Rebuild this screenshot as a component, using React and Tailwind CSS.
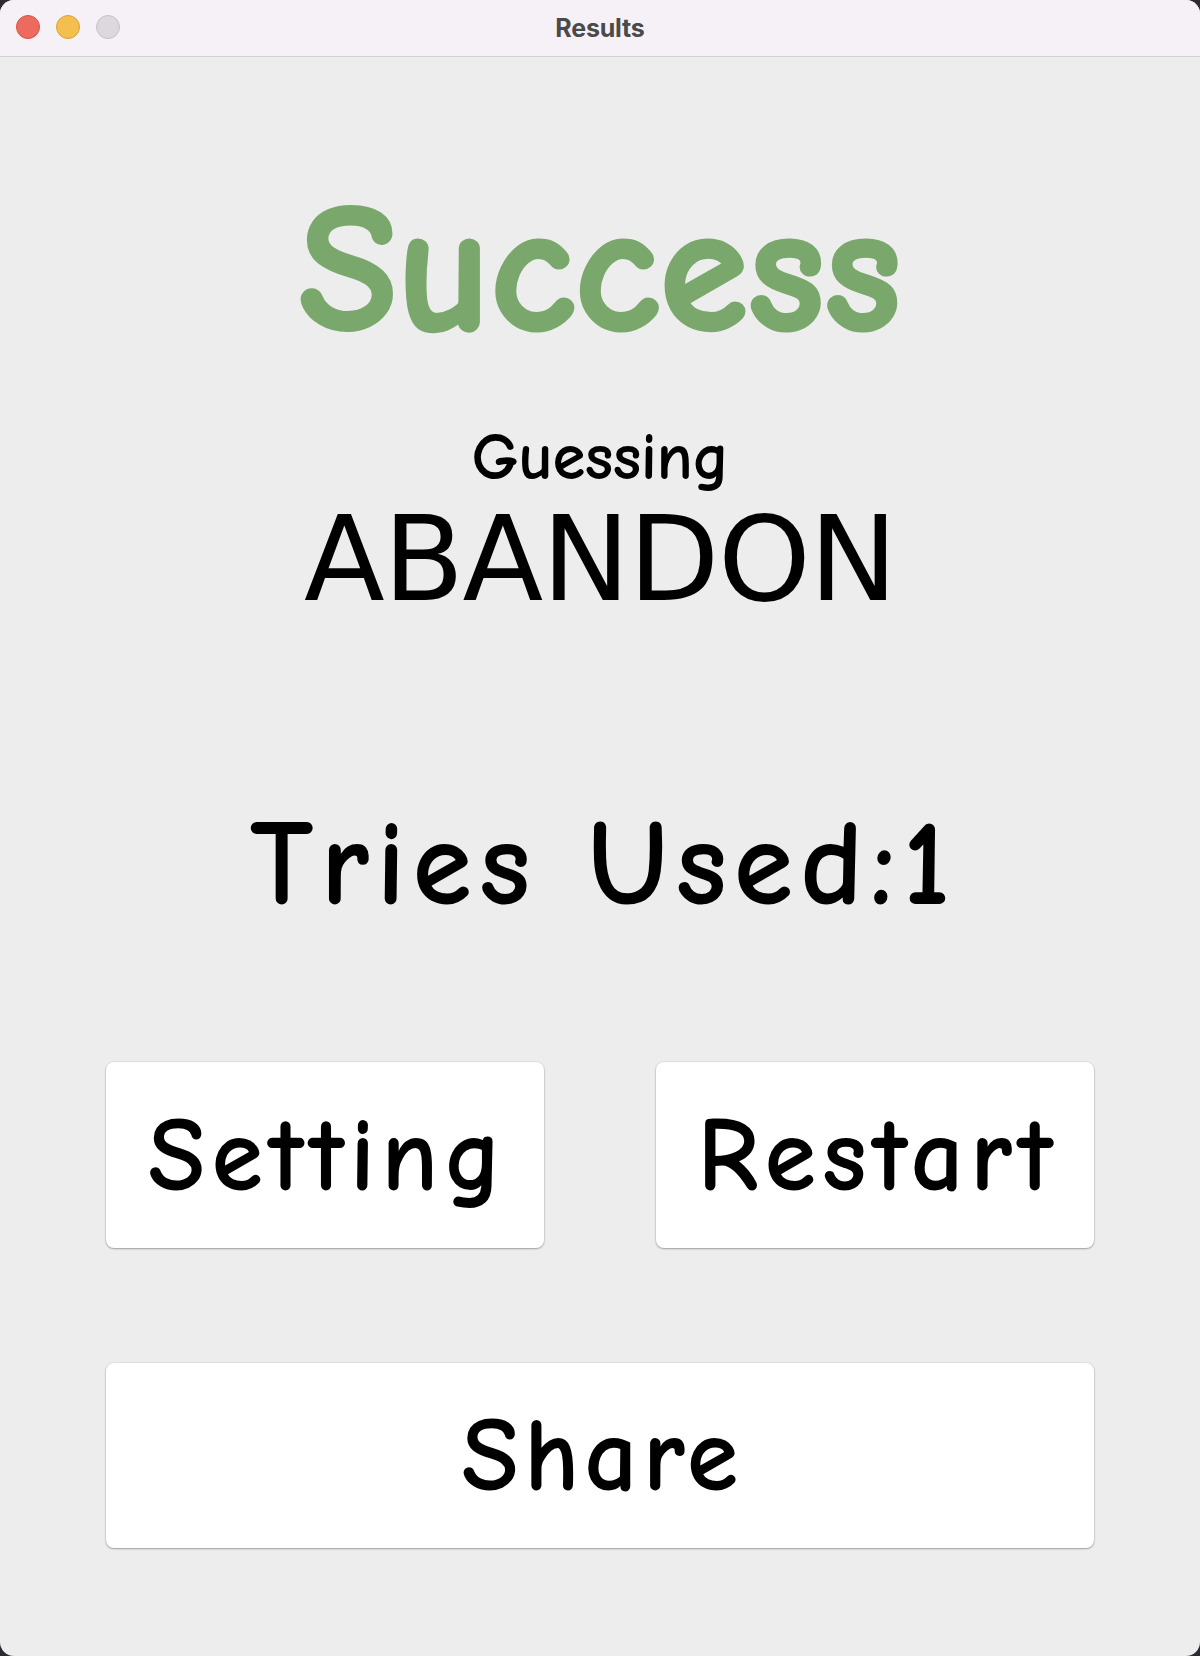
import React from "react";

const comic = { fontFamily: '"Comic Sans MS", "Comic Neue", "Open Sans", sans-serif' };

export default function App() {
  return (
    <div className="w-[1200px] h-[1656px] bg-[#2b2b30]">
      <div className="w-full h-full bg-[#ededed] rounded-[14px] overflow-hidden flex flex-col">
        {/* title bar */}
        <div className="relative h-[57px] shrink-0 bg-[#f6f1f7] border-b border-[#d2d0d3] flex items-center justify-center">
          <div className="absolute left-[16px] top-[15px] flex gap-[16px]">
            <div className="w-[24px] h-[24px] rounded-full bg-[#ed6a5e] border border-[#d65347]" />
            <div className="w-[24px] h-[24px] rounded-full bg-[#f5bf4f] border border-[#d9a23b]" />
            <div className="w-[24px] h-[24px] rounded-full bg-[#dcd8dd] border border-[#c5c1c6]" />
          </div>
          <span
            className="text-[25px] font-bold text-[#4a4a4a] leading-none tracking-[-0.2px]"
            style={{ fontFamily: 'Inter, "Liberation Sans", sans-serif' }}
          >
            Results
          </span>
        </div>

        {/* content */}
        <div className="flex flex-col items-center">
          <div
            className="mt-[124px] text-[180px] leading-none font-bold text-[#7aa86c] [-webkit-text-stroke:4px_#7aa86c]"
            style={comic}
          >
            Success
          </div>
          <div
            className="mt-[63px] text-[67px] leading-none font-bold text-black tracking-[-0.5px]"
            style={comic}
          >
            Guessing
          </div>
          <div
            className="mt-[9px] text-[118px] leading-none text-black tracking-[-1.5px]"
            style={{ fontFamily: '"DejaVu Sans", "Lucida Grande", sans-serif' }}
          >
            ABANDON
          </div>
          <div
            className="mt-[186px] pl-[7px] text-[121px] leading-none font-bold text-black tracking-[7px]"
            style={comic}
          >
            Tries Used:1
          </div>

          <div className="mt-[137px] flex gap-[112px]">
            <button className="w-[438px] h-[186px] bg-white rounded-[8px] shadow-[0_1px_2px_rgba(0,0,0,0.3)] ring-1 ring-black/5 flex items-center justify-center">
              <span
                className="pl-[6px] text-[105px] leading-none font-bold text-black tracking-[6px]"
                style={comic}
              >
                Setting
              </span>
            </button>
            <button className="w-[438px] h-[186px] bg-white rounded-[8px] shadow-[0_1px_2px_rgba(0,0,0,0.3)] ring-1 ring-black/5 flex items-center justify-center">
              <span
                className="pl-[6px] text-[105px] leading-none font-bold text-black tracking-[6px]"
                style={comic}
              >
                Restart
              </span>
            </button>
          </div>

          <button className="mt-[115px] w-[988px] h-[185px] bg-white rounded-[8px] shadow-[0_1px_2px_rgba(0,0,0,0.3)] ring-1 ring-black/5 flex items-center justify-center">
            <span
              className="pl-[5px] text-[105px] leading-none font-bold text-black tracking-[5px]"
              style={comic}
            >
              Share
            </span>
          </button>
        </div>
      </div>
    </div>
  );
}
